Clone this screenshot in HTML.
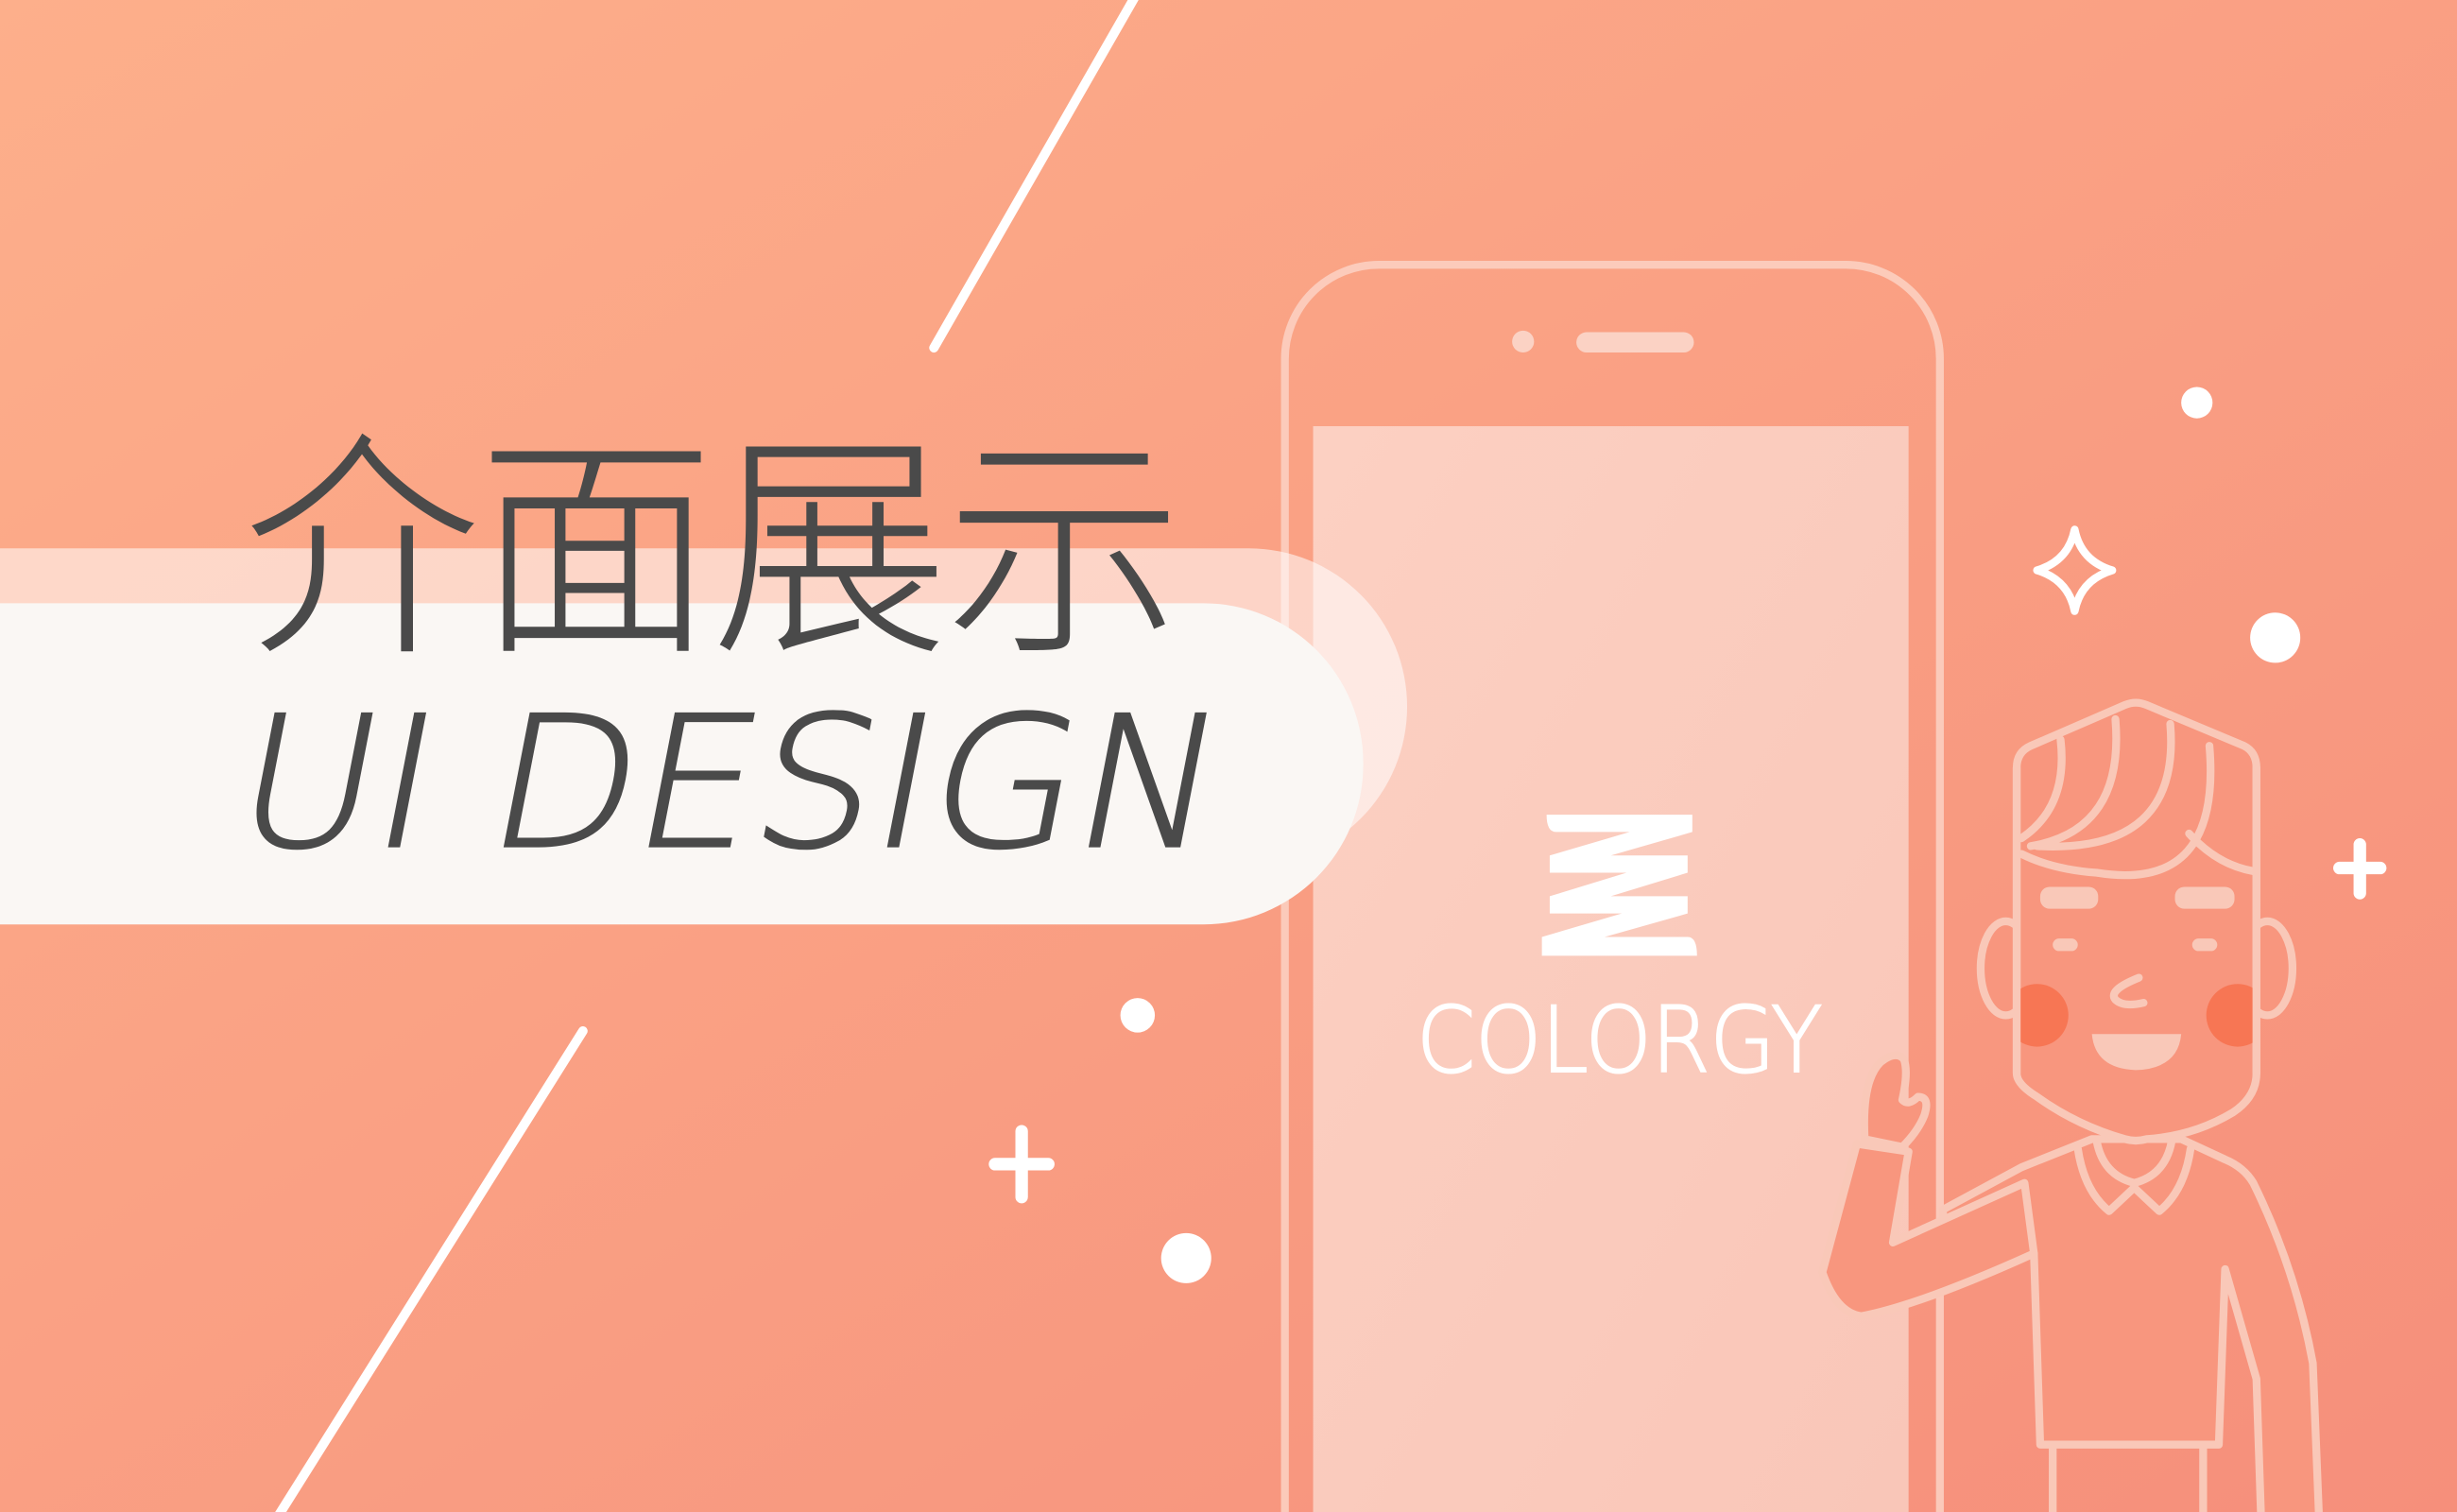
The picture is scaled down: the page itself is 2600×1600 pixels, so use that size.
<!DOCTYPE html>
<html><head><meta charset="utf-8"><style>
html,body{margin:0;padding:0;width:2600px;height:1600px;overflow:hidden}
svg{display:block;position:absolute;left:0;top:0}
</style></head><body>
<svg width="2600" height="1600" viewBox="0 0 1568 965" xmlns="http://www.w3.org/2000/svg" preserveAspectRatio="none">
<defs>
<linearGradient id="bg" x1="0" y1="0" x2="1" y2="1">
<stop offset="0" stop-color="#fdaf8b"/><stop offset="1" stop-color="#f68f7b"/>
</linearGradient>
<linearGradient id="scr" x1="0" y1="0" x2="1" y2="1">
<stop offset="0" stop-color="#fcd0c2"/><stop offset="1" stop-color="#f9c6b8"/>
</linearGradient>
<clipPath id="face"><rect x="1287" y="470" width="153" height="260"/></clipPath>
<clipPath id="all"><rect width="1568" height="965"/></clipPath>
</defs>
<g clip-path="url(#all)">
<rect width="1568" height="965" fill="url(#bg)"/>
<g stroke="#fff" stroke-width="6" stroke-linecap="round">
<line x1="596" y1="222" x2="726" y2="-5"/>
<line x1="372" y1="658" x2="176" y2="970"/>
</g>
<g fill="#fff">
<circle cx="1402" cy="257" r="10"/><circle cx="1452" cy="407" r="16"/>
<circle cx="726" cy="648" r="11"/><circle cx="757" cy="803" r="16"/>
</g>
<g stroke="#fff" stroke-width="8" stroke-linecap="round">
<line x1="652" y1="722" x2="652" y2="764"/><line x1="635" y1="743" x2="669" y2="743"/>
<line x1="1506" y1="539" x2="1506" y2="570"/><line x1="1493" y1="554" x2="1519" y2="554"/>
</g>
<path d="M1324,338 Q1328,358 1348,364 Q1328,370 1324,390 Q1320,370 1300,364 Q1320,358 1324,338 Z" fill="none" stroke="#fff" stroke-width="5" stroke-linejoin="round"/>
<rect x="820" y="169" width="418" height="860" rx="60" fill="none" stroke="#fbd2c4" stroke-width="5" opacity="0.85"/>
<rect x="838" y="272" width="380" height="700" fill="url(#scr)"/>
<circle cx="972" cy="218" r="7" fill="#fbd2c4"/>
<rect x="1006" y="212" width="75" height="13" rx="6.5" fill="#fbd2c4"/>
<path d="M987,520 H1080 V531 L1028,546 H1077 V557 L1028,572 H1077 V583 L1024,598 H1077 Q1083,598 1083,610 H984 V598 L1035,583 H989 V572 L1038,557 H989 V546 L1040,531 H993 Q987,531 987,520 Z" fill="#fff"/>
<text x="904" y="684" font-family="DejaVu Sans, Liberation Sans, sans-serif" font-weight="200" font-size="58" fill="#fff" stroke="#fff" stroke-width="1.2" textLength="259" lengthAdjust="spacingAndGlyphs">COLORGY</text>
<rect x="-120" y="350" width="1018" height="202" rx="101" fill="#fff" opacity="0.55"/>
<rect x="-120" y="385" width="990" height="205" rx="102" fill="#faf7f4"/>
<text x="155" y="404" font-family="Noto Sans CJK SC, sans-serif" font-weight="300" font-size="152" fill="#4a4a4a" textLength="600" lengthAdjust="spacing">介面展示</text>
<g transform="translate(146,540) skewX(-11)">
<text x="0" y="0" font-family="DejaVu Sans, Liberation Sans, sans-serif" font-weight="200" font-size="116" fill="#4a4a4a" stroke="#4a4a4a" stroke-width="1.5" textLength="625" lengthAdjust="spacingAndGlyphs">UI DESIGN</text>
</g>
<g stroke="#f9c8b8" stroke-width="5" stroke-linecap="round" stroke-linejoin="round" fill="#f8967e">
<path d="M1335,727 L1290,745 L1240,772 L1240,790 L1298,800 L1302,922 L1416,922 L1420,810 L1440,880 L1443,970 L1480,970 L1476,870 Q1465,810 1438,755 Q1432,745 1420,740 L1392,727 Z"/>
<path d="M1310,922 V970 M1406,922 V970" fill="none"/>
<path d="M1185,730 L1163,812 Q1172,838 1188,840 Q1225,833 1298,800 L1292,755 L1208,793 L1218,735 Z"/>
<path d="M1190,727 Q1188,690 1200,678 Q1210,670 1215,676 Q1218,684 1214,702 Q1218,706 1224,700 Q1232,700 1228,712 Q1224,722 1214,732 Z"/>
<path d="M1326,733 Q1330,760 1346,773 L1362,758 L1378,773 Q1394,760 1398,733" fill="none"/>
<path d="M1338,728 Q1342,750 1362,755 Q1382,750 1386,728" fill="none"/>
<ellipse cx="1280" cy="618" rx="16" ry="30"/>
<ellipse cx="1447" cy="618" rx="16" ry="30"/>
<path d="M1287,685 L1287,490 Q1287,480 1296,476 L1356,450 Q1363,447 1370,450 L1432,476 Q1440,480 1440,490 L1440,685 Q1440,700 1425,710 Q1400,725 1370,727 Q1363,729 1356,727 Q1325,718 1300,700 Q1287,692 1287,685 Z"/>
<g clip-path="url(#face)" stroke="none" fill="#f77654">
<circle cx="1300" cy="648" r="20"/><circle cx="1428" cy="648" r="20"/>
</g>
<path d="M1287,685 L1287,490 M1440,490 L1440,685" fill="none"/>
<g fill="none">
<path d="M1315,472 Q1320,515 1290,535"/>
<path d="M1350,459 Q1356,530 1296,540"/>
<path d="M1385,462 Q1392,545 1300,540"/>
<path d="M1410,476 Q1418,570 1338,557 Q1310,555 1290,545"/>
<path d="M1397,532 Q1415,552 1438,556"/>
</g>
</g>
<g fill="#f9c8b8">
<rect x="1302" y="566" width="37" height="14" rx="6"/>
<rect x="1388" y="566" width="38" height="14" rx="6"/>
<rect x="1310" y="599" width="16" height="8" rx="4"/>
<rect x="1399" y="599" width="16" height="8" rx="4"/>
<path d="M1335,660 L1392,660 Q1390,682 1363,683 Q1337,682 1335,660 Z"/>
</g>
<path d="M1365,624 Q1345,632 1350,638 Q1355,643 1368,640" fill="none" stroke="#f9c8b8" stroke-width="5" stroke-linecap="round"/>
</g>
</svg>
</body></html>
